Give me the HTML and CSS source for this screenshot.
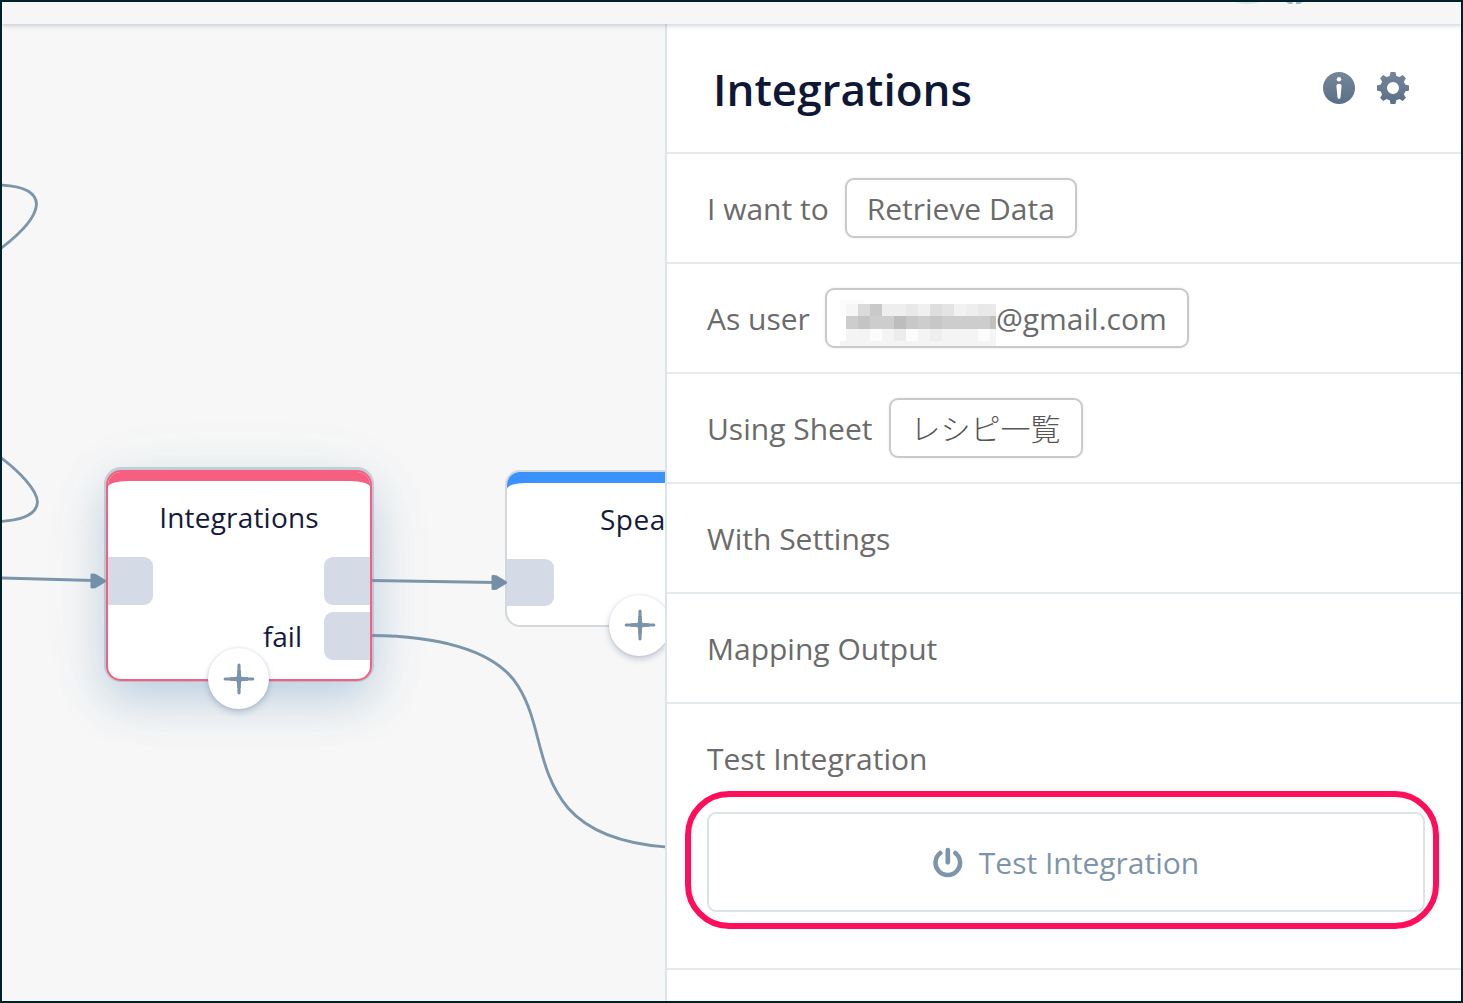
FILE: index.html
```html
<!DOCTYPE html>
<html lang="en">
<head>
<meta charset="utf-8">
<title>Integrations</title>
<link rel="stylesheet" href="styles.css">
</head>
<body>
<div class="app">
  <header class="topbar">
    <svg class="topbar-icons" width="74" height="22" viewBox="0 0 74 22">
      <ellipse cx="15" cy="-2" rx="14" ry="4" fill="#d5ebe2"/>
      <path d="M54 0h6.500v2h-3.500zM64 0h6.500l-2.500 2h-4z" fill="#a3b8c9"/>
    </svg>
  </header>
  <main class="workspace">
    <section class="canvas">
      <div class="node node-selected">
        <div class="node-cap"></div>
        <div class="node-title">Integrations</div>
        <span class="port port-in"></span>
        <span class="port port-out"></span>
        <span class="port port-fail"></span>
        <span class="port-label">fail</span>
      </div>
      <div class="node node-speak">
        <div class="node-cap"></div>
        <div class="node-title">Spea</div>
        <span class="port port-in"></span>
      </div>
      <svg class="edges" width="663" height="977" viewBox="2 24 663 977">
        <g fill="none" stroke="#7b95ab" stroke-width="2.9">
          <path d="M0 185C26 186 36 194 36.500 204C36 217 20 234 0 249"/>
          <path d="M0 457C20 472 37 490 37.500 502C37 513 24 520 0 521.500"/>
          <path d="M0 578L94 580.500"/>
          <path d="M372 580.500L496 582.500"/>
          <path d="M372 635.500C430 636 494 647 518 686C542 724 536 770 568 808C590 833 624 844 667 847"/>
        </g>
        <g fill="#7390a8" stroke="#7390a8" stroke-width="3" stroke-linejoin="round">
          <path d="M92 575v12l3-.2 9.500-5.800-9.500-5.800z"/>
          <path d="M493 576.500v12l3-.2 9.500-5.800-9.500-5.800z"/>
        </g>
      </svg>
      <div class="add add-selected"><svg width="32" height="32" viewBox="0 0 32 32"><path d="M16 2.200V29.800M2.200 16H29.800" stroke="#7b93a8" stroke-width="3.200" stroke-linecap="round"/><path d="M14.300 7L14 13L13 14L7 14.300V17.700L13 18L14 19L14.300 25H17.700L18 19L19 18L25 17.700V14.300L19 14L18 13L17.700 7Z" fill="#7b93a8"/></svg></div>
      <div class="add add-speak"><svg width="32" height="32" viewBox="0 0 32 32"><path d="M16 2.200V29.800M2.200 16H29.800" stroke="#7b93a8" stroke-width="3.200" stroke-linecap="round"/><path d="M14.300 7L14 13L13 14L7 14.300V17.700L13 18L14 19L14.300 25H17.700L18 19L19 18L25 17.700V14.300L19 14L18 13L17.700 7Z" fill="#7b93a8"/></svg></div>
    </section>
    <aside class="panel">
      <div class="panel-head">
        <h1>Integrations</h1>
        <div class="panel-tools">
          <svg width="32" height="32" viewBox="0 0 32 32">
            <defs><linearGradient id="slate" x1="0" y1="0" x2="0" y2="1"><stop offset="0" stop-color="#75869a"/><stop offset="1" stop-color="#5a6f88"/></linearGradient></defs>
            <circle cx="16" cy="16" r="16" fill="url(#slate)"/>
            <circle cx="16" cy="7.300" r="2.200" fill="#fff"/>
            <path d="M13.400 14c0-3 5.200-3 5.200 0L17.400 26q-1.400 1.700-2.800 0z" fill="#fff"/>
          </svg>
          <svg width="32" height="32" viewBox="0 0 32 32">
            <path fill="url(#slate)" fill-rule="evenodd" d="M13.600 0h4.800l1 3.900q1.600.4 3 1.200l3.400-2 3.100 3.100-2 3.500q.8 1.400 1.200 2.900l3.900 1v4.800l-3.900 1q-.4 1.600-1.200 3l2 3.400-3.100 3.100-3.400-2q-1.400.8-3 1.200l-1 3.900h-4.800l-1-3.900q-1.600-.4-3-1.200l-3.400 2-3.100-3.100 2-3.400q-.8-1.400-1.200-3l-3.900-1v-4.800l3.900-1q.4-1.600 1.200-3l-2-3.400 3.100-3.100 3.400 2q1.400-.8 3-1.200zM16 10a6 6 0 1 0 0 12 6 6 0 0 0 0-12z"/>
          </svg>
        </div>
      </div>
      <div class="row"><span>I want to</span><span class="chip chip-action">Retrieve Data</span></div>
      <div class="row row-user"><span>As user</span><span class="chip chip-user"><svg class="mosaic" width="156" height="46" viewBox="840 300 156 46" shape-rendering="crispEdges">
        <path d="M840 300h24v4h-24zM840 304h6v12h-6z" fill="#fcfcfc"/>
        <path d="M846 304h12v12h-12z" fill="#f6f6f6"/><path d="M858 304h12v12h-12z" fill="#dadada"/><path d="M870 304h12v12h-12z" fill="#c9c9c9"/>
        <path d="M882 304h24v12h-24z" fill="#eee"/><path d="M906 304h12v12h-12z" fill="#e9e9e9"/><path d="M918 304h12v12h-12z" fill="#f0f0f0"/><path d="M930 304h12v12h-12z" fill="#dedede"/><path d="M942 304h12v12h-12z" fill="#e4e4e4"/><path d="M954 304h12v12h-12z" fill="#f2f2f2"/><path d="M966 304h12v12h-12z" fill="#eee"/><path d="M978 304h18v12h-18z" fill="#e9e9e9"/>
        <path d="M846 316h150v13h-150z" fill="#cdcdcd"/><path d="M858 316h12v13h-12z" fill="#c4c4c4"/><path d="M894 316h12v13h-12z" fill="#bdbdbd"/><path d="M906 316h12v13h-12z" fill="#c8c8c8"/><path d="M930 316h12v13h-12z" fill="#c7c7c7"/><path d="M990 316h6v13h-6z" fill="#c0c0c0"/>
        <path d="M846 329h150v12h-150z" fill="#f4f4f4"/><path d="M870 329h12v12h-12zM906 329h12v12h-12zM978 329h12v12h-12z" fill="#fcfcfc"/><path d="M894 329h12v12h-12z" fill="#ececec"/><path d="M930 329h12v12h-12z" fill="#eee"/>
        <path d="M840 341h156v5h-156z" fill="#f4f4f4"/>
      </svg>@gmail.com</span></div>
      <div class="row row-sheet"><span>Using Sheet</span><span class="chip chip-sheet">レシピ一覧</span></div>
      <div class="row">With Settings</div>
      <div class="row">Mapping Output</div>
      <div class="test">
        <div class="test-label">Test Integration</div>
        <div class="highlight">
          <button class="test-button">
            <svg width="30" height="32" viewBox="0 0 30 32"><path d="M7.300 7A12.300 12.300 0 1 0 22.300 7" fill="none" stroke="#7d95aa" stroke-width="4.500" stroke-linecap="round"/><path d="M14.800 4.100V16.300" stroke="#7d95aa" stroke-width="4.700" stroke-linecap="round"/></svg>
            <span>Test Integration</span>
          </button>
        </div>
      </div>
    </aside>
  </main>
</div>
</body>
</html>
```
FILE: styles.css
```css
* { box-sizing: border-box; }
body { margin: 0; font-family: "Open Sans", "Noto Sans CJK JP", sans-serif; }
.app {
  width: 1463px;
  height: 1003px;
  border: 2px solid #00202a;
  background: #f7f7f7;
  overflow: hidden;
  display: flex;
  flex-direction: column;
}
.topbar {
  height: 22px;
  flex: none;
  background: #f6f6f7;
  box-shadow: 0 1px 5px rgba(90, 115, 135, .4);
  position: relative;
  z-index: 5;
  padding-left: 1230px;
}
.topbar-icons { display: block; }
.workspace { flex: 1; display: flex; min-height: 0; }
.canvas { width: 663px; flex: none; position: relative; overflow: hidden; background: #f7f7f7; }
.edges { position: absolute; left: 0; top: 0; }

.node { position: absolute; background: #fff; border-radius: 15px; color: #141a3c; font-size: 28px; }
.node-selected {
  left: 104px;
  top: 446px;
  width: 266px;
  height: 211px;
  border: 2px solid #f75f80;
  box-shadow: 0 -1px 0 2px rgba(150, 175, 185, .5), 0 18px 46px rgba(75, 130, 180, .32), 0 10px 80px rgba(90, 150, 170, .06);
}
.node-speak { left: 503px; top: 446px; width: 266px; height: 157px; border: 2px solid #d3d8dc; }
.node-cap { display: flow-root; height: 24px; border-radius: 13px 13px 0 0; overflow: hidden; background: #f75f80; }
.node-speak .node-cap { background: #3a92ff; }
.node-cap::after { content: ""; display: block; height: 20px; margin-top: 9px; background: #fff; border-radius: 20px 20px 0 0 / 6px 6px 0 0; }
.node-speak .node-cap::after { margin-top: 11px; border-radius: 18px 18px 0 0 / 6px 6px 0 0; }
.node-title { text-align: center; line-height: 38px; margin-top: 2px; letter-spacing: .2px; }
.node-speak .node-title { margin-top: 4px; text-align: left; padding-left: 93px; letter-spacing: .5px; }
.port { position: absolute; width: 46px; height: 48px; background: #d4dbe6; }
.port-in { left: 0; top: 85px; border-radius: 0 9px 9px 0; }
.node-selected .port-in { width: 45px; }
.node-speak .port-in { top: 87px; width: 47px; height: 47px; }
.port-out { right: 0; top: 85px; border-radius: 9px 0 0 9px; }
.port-fail { right: 0; top: 140px; border-radius: 9px 0 0 9px; }
.port-label { position: absolute; right: 68px; top: 145px; line-height: 38px; }
.add {
  position: absolute;
  width: 61px;
  height: 61px;
  border-radius: 50%;
  background: #fff;
  display: grid;
  place-items: center;
  box-shadow: 0 3px 6px rgba(75, 100, 140, .32), 0 0 2px rgba(75, 100, 140, .2);
}
.add-selected { left: 206px; top: 624px; }
.add-speak { left: 607px; top: 570.5px; }

.panel { flex: 1; background: #fff; border-left: 2px solid #dbe4e8; color: #6b6b6b; font-size: 30px; }
.panel-head {
  height: 130px;
  border-bottom: 2px solid #e4e9ed;
  padding: 0 53px 0 46px;
  display: flex;
  align-items: center;
  justify-content: space-between;
}
.panel-head h1 { margin: 1px 0 0; font-size: 44px; font-weight: 600; line-height: 60px; color: #0f1736; }
.panel-tools { display: flex; gap: 22px; }
.row {
  height: 110px;
  padding: 0 40px;
  border-bottom: 2px solid #e4e9ed;
  display: flex;
  align-items: center;
  gap: 16px;
  white-space: nowrap;
}
.row-user { gap: 15px; }
.row-sheet { gap: 17px; }
.chip {
  height: 60px;
  border: 2px solid #c8c9cb;
  border-radius: 9px;
  padding: 0 20px;
  display: flex;
  align-items: center;
  justify-content: center;
  box-shadow: 0 0 3px rgba(130, 150, 170, .2);
}
.chip-action { width: 232px; }
.chip-user { width: 364px; padding: 0 0 0 13px; justify-content: flex-start; }
.mosaic { margin-top: 10px; flex: none; }
.chip-sheet { width: 194px; padding: 0 2px 3px 0; font-weight: 300; color: #555; }
.test { height: 266px; border-bottom: 2px solid #e4e9ed; padding: 34px 23px 0 18px; }
.test-label { padding-left: 22px; line-height: 42px; }
.highlight {
  margin-top: 11px;
  height: 138px;
  border: 6px solid #ff0f5b;
  border-radius: 44px;
  padding: 15px 8px 15px 16px;
}
.test-button {
  width: 718px;
  height: 100px;
  border: 2px solid #dae4e7;
  border-radius: 9px;
  background: transparent;
  color: #7d95aa;
  font: inherit;
  display: flex;
  align-items: center;
  justify-content: center;
  gap: 16px;
}
```
